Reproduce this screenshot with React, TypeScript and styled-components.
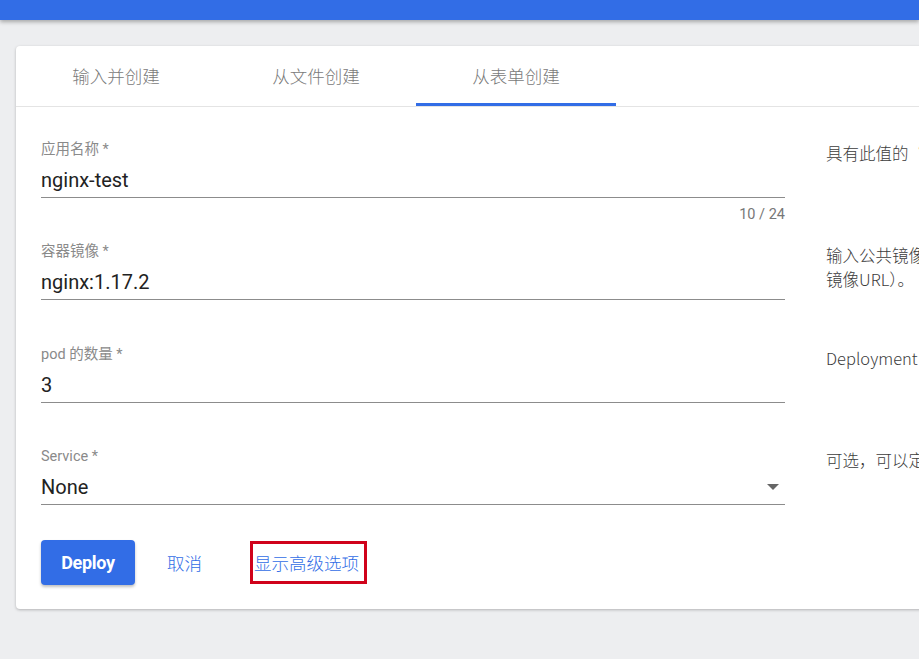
import React, { useState } from "react";
import styled, { createGlobalStyle } from "styled-components";

const BLUE = "#326de6";

const GlobalStyle = createGlobalStyle`
  html, body {
    margin: 0;
    padding: 0;
    background: #edeef0;
    overflow: hidden;
  }
  body {
    font-family: Roboto, "Noto Sans CJK SC", sans-serif;
  }
`;

const Page = styled.div`
  width: 919px;
  height: 659px;
  overflow: hidden;
  background: #edeef0;
`;

const TopBar = styled.div`
  height: 20px;
  background: ${BLUE};
  box-shadow: 0 2px 4px rgba(0, 0, 0, 0.3);
`;

const Content = styled.div`
  padding: 26px 0 0 16px;
`;

const Card = styled.div`
  width: 1100px;
  background: #fff;
  border-radius: 4px;
  box-shadow: 0 1px 3px rgba(0, 0, 0, 0.25);
  padding-bottom: 24px;
`;

const TabBar = styled.div`
  display: flex;
  height: 60px;
  border-bottom: 1px solid #e4e4e4;
`;

const Tab = styled.div<{ active?: boolean }>`
  width: 200px;
  display: flex;
  align-items: center;
  justify-content: center;
  font-size: 17.5px;
  color: #7a7a7a;
  font-family: "Noto Sans CJK SC", sans-serif;
  font-weight: 300;
  box-sizing: border-box;
  padding-top: 1px;
  border-bottom: 3px solid ${(p) => (p.active ? BLUE : "transparent")};
`;

const Body = styled.div`
  padding: 33px 0 0 25px;
`;

const Row = styled.div<{ h: number }>`
  display: grid;
  grid-template-columns: 744px 300px;
  column-gap: 41px;
  height: ${(p) => p.h}px;
`;

const Field = styled.div`
  display: flex;
  flex-direction: column;
`;

const Label = styled.div`
  font-size: 14.5px;
  color: #8a8a8a;
  height: 20px;
  line-height: 20px;
`;

const InputLine = styled.div`
  display: flex;
  align-items: center;
  justify-content: space-between;
  box-sizing: border-box;
  height: 38px;
  padding-top: 3px;
  border-bottom: 1px solid #8c8c8c;
  font-size: 20px;
  color: #222;
`;

const Counter = styled.div`
  text-align: right;
  font-size: 14.5px;
  color: #777;
  line-height: 18px;
  margin-top: 8px;
`;

const Arrow = styled.div`
  width: 0;
  height: 0;
  border-left: 6px solid transparent;
  border-right: 6px solid transparent;
  border-top: 6px solid #666;
  margin-right: 6px;
`;

const Help = styled.div`
  font-size: 16.5px;
  color: #3c3c3c;
  line-height: 24px;
  padding-top: 1px;
  font-family: "Noto Sans CJK SC", sans-serif;
  font-weight: 300;
  white-space: nowrap;
`;

const Actions = styled.div`
  display: flex;
  align-items: center;
`;

const PrimaryButton = styled.button`
  width: 94px;
  height: 45px;
  border: none;
  border-radius: 4px;
  background: ${BLUE};
  color: #fff;
  font-family: Roboto, sans-serif;
  font-weight: 700;
  font-size: 18px;
  box-shadow: 0 2px 3px rgba(0, 0, 0, 0.25);
  letter-spacing: -0.3px;
`;

const TextButton = styled.button<{ outlined?: boolean }>`
  background: none;
  border: ${(p) => (p.outlined ? "3px solid #d0021b" : "none")};
  color: ${BLUE};
  font-size: 17.5px;
  font-family: "Noto Sans CJK SC", sans-serif;
  font-weight: 300;
  padding: ${(p) => (p.outlined ? "0 5px 0 1px" : "0")};
  height: ${(p) => (p.outlined ? "43px" : "auto")};
`;

export default function App() {
  const [tab] = useState(2);
  const tabs = ["输入并创建", "从文件创建", "从表单创建"];

  return (
    <Page>
      <GlobalStyle />
      <TopBar />
      <Content>
        <Card>
          <TabBar>
            {tabs.map((t, i) => (
              <Tab key={t} active={i === tab}>
                {t}
              </Tab>
            ))}
          </TabBar>
          <Body>
            <Row h={102}>
              <Field>
                <Label>应用名称 *</Label>
                <InputLine>nginx-test</InputLine>
                <Counter>10 / 24</Counter>
              </Field>
              <Help>具有此值的“app”标签将被添加到部署的资源中。</Help>
            </Row>
            <Row h={103}>
              <Field>
                <Label>容器镜像 *</Label>
                <InputLine>nginx:1.17.2</InputLine>
              </Field>
              <Help>
                输入公共镜像仓库中的镜像地址，或者私有镜像仓库的
                <br />
                镜像URL）。
              </Help>
            </Row>
            <Row h={102}>
              <Field>
                <Label>pod 的数量 *</Label>
                <InputLine>3</InputLine>
              </Field>
              <Help>Deployment 将创建 Pod 以维持所需数量的副本。</Help>
            </Row>
            <Row h={93}>
              <Field>
                <Label>Service *</Label>
                <InputLine>
                  None
                  <Arrow />
                </InputLine>
              </Field>
              <Help>可选，可以定义一个内部或外部服务。</Help>
            </Row>
            <Actions>
              <PrimaryButton>Deploy</PrimaryButton>
              <TextButton style={{ marginLeft: 32 }}>取消</TextButton>
              <TextButton outlined style={{ marginLeft: 48 }}>
                显示高级选项
              </TextButton>
            </Actions>
          </Body>
        </Card>
      </Content>
    </Page>
  );
}
